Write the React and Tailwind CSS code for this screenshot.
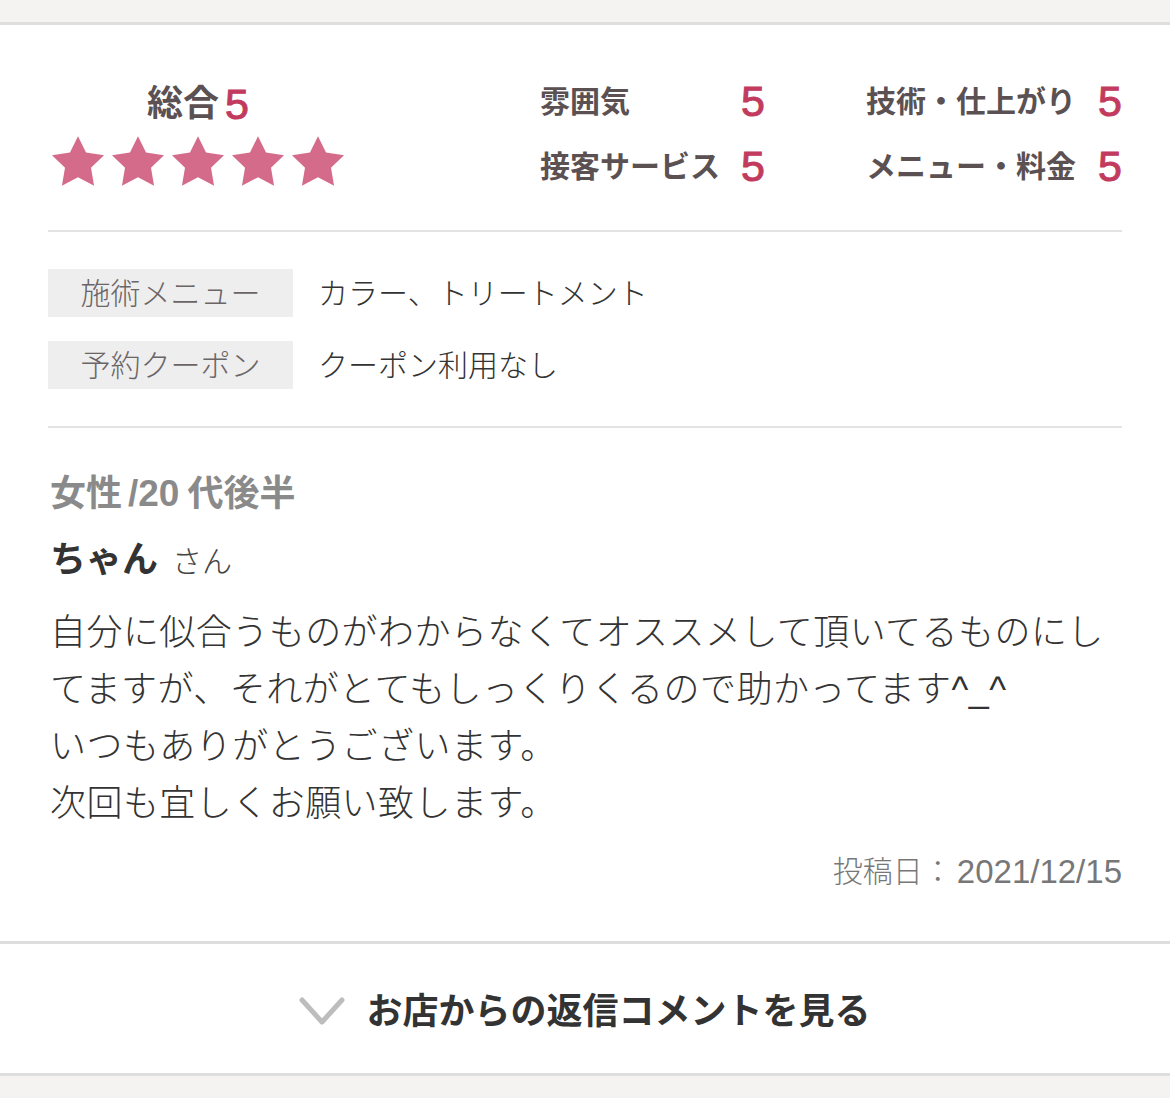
const font = { fontFamily: '"Liberation Sans", "Noto Sans CJK JP", sans-serif' };

function Star() {
  return (
    <svg width="52" height="50" viewBox="2 2 20 19.02" className="block">
      <path
        d="M12 2l3.09 6.26L22 9.27l-5 4.87 1.18 6.88L12 17.77l-6.18 3.25L7 14.14 2 9.27l6.91-1.01L12 2z"
        fill="#d56b8b"
      />
    </svg>
  );
}

function Score({ label }) {
  return (
    <div className="flex h-[65px] items-center justify-between">
      <span className="text-[30px] font-bold text-[#5b5152]">{label}</span>
      <span className="text-[43px] leading-none text-[#c23a5e] [-webkit-text-stroke:1px_#c23a5e]">5</span>
    </div>
  );
}

function InfoRow({ label, value }) {
  return (
    <div className="flex items-center">
      <div className="flex h-[48px] w-[245px] items-center justify-center bg-[#eeeeee] text-[30px] font-light text-[#6b6566]">
        {label}
      </div>
      <div className="ml-[25px] text-[30px] font-light text-[#333333]">{value}</div>
    </div>
  );
}

export default function App() {
  return (
    <div style={font} className="w-[1170px] bg-[#f4f3f2]">
      <div className="h-[22px]" />
      <section className="border-y-[3px] border-[#dedede] bg-white">
        <div className="px-[48px]">
          {/* valoraciones */}
          <div className="flex items-start border-b-2 border-[#e3e3e3] pt-[44px] pb-[31px]">
            <div className="flex w-[300px] flex-col items-center pt-[13px]">
              <div className="flex h-[44px] items-center gap-[6px]">
                <span className="text-[36px] font-bold text-[#5b5152]">総合</span>
                <span className="text-[43px] leading-none text-[#c23a5e] [-webkit-text-stroke:1px_#c23a5e]">5</span>
              </div>
              <div className="mt-[10px] flex gap-[8px]">
                <Star />
                <Star />
                <Star />
                <Star />
                <Star />
              </div>
            </div>
            <div className="ml-auto grid grid-cols-[225px_256px] gap-x-[101px]">
              <Score label="雰囲気" />
              <Score label="技術・仕上がり" />
              <Score label="接客サービス" />
              <Score label="メニュー・料金" />
            </div>
          </div>

          {/* menu y cupon */}
          <div className="flex flex-col gap-[24px] border-b-2 border-[#e3e3e3] py-[37px]">
            <InfoRow label="施術メニュー" value="カラー、トリートメント" />
            <InfoRow label="予約クーポン" value="クーポン利用なし" />
          </div>

          {/* comentario */}
          <div className="pt-[42px] pb-[47px] pl-[2px]">
            <div className="flex h-[48px] items-center text-[36px] leading-[48px] font-bold text-[#8a8a8a]">
              <span>女性</span>
              <span className="ml-[6px] text-[37px]">/20</span>
              <span className="ml-[8px]">代後半</span>
            </div>
            <div className="mt-[18px] flex h-[48px] items-baseline leading-[48px]">
              <span className="text-[36px] font-bold text-[#333333]">ちゃん</span>
              <span className="ml-[14px] text-[30px] font-light text-[#444444]">さん</span>
            </div>
            <p className="mt-[20px] text-[36px] leading-[57px] font-light tracking-[0.45px] text-[#333333]">
              自分に似合うものがわからなくてオススメして頂いてるものにし
              <br />
              てますが、それがとてもしっくりくるので助かってます^_^
              <br />
              いつもありがとうございます。
              <br />
              次回も宜しくお願い致します。
            </p>
            <div className="mt-[18px] flex h-[44px] items-center justify-end leading-[44px] font-light text-[#777777]">
              <span className="text-[30px]">投稿日：</span>
              <span className="ml-[4px] text-[33px]">2021/12/15</span>
            </div>
          </div>
        </div>

        <button
          type="button"
          className="flex h-[132px] w-full items-center justify-center border-t-[3px] border-[#dedede] pt-[6px]"
        >
          <svg width="46" height="30" viewBox="0 0 46 30" className="mr-[21px]">
            <path d="M3 3l20 22 20-22" fill="none" stroke="#bdbdbd" strokeWidth="5" strokeLinecap="round" strokeLinejoin="round" />
          </svg>
          <span className="text-[36px] font-bold text-[#333333]">お店からの返信コメントを見る</span>
        </button>
      </section>
      <div className="h-[22px]" />
    </div>
  );
}
